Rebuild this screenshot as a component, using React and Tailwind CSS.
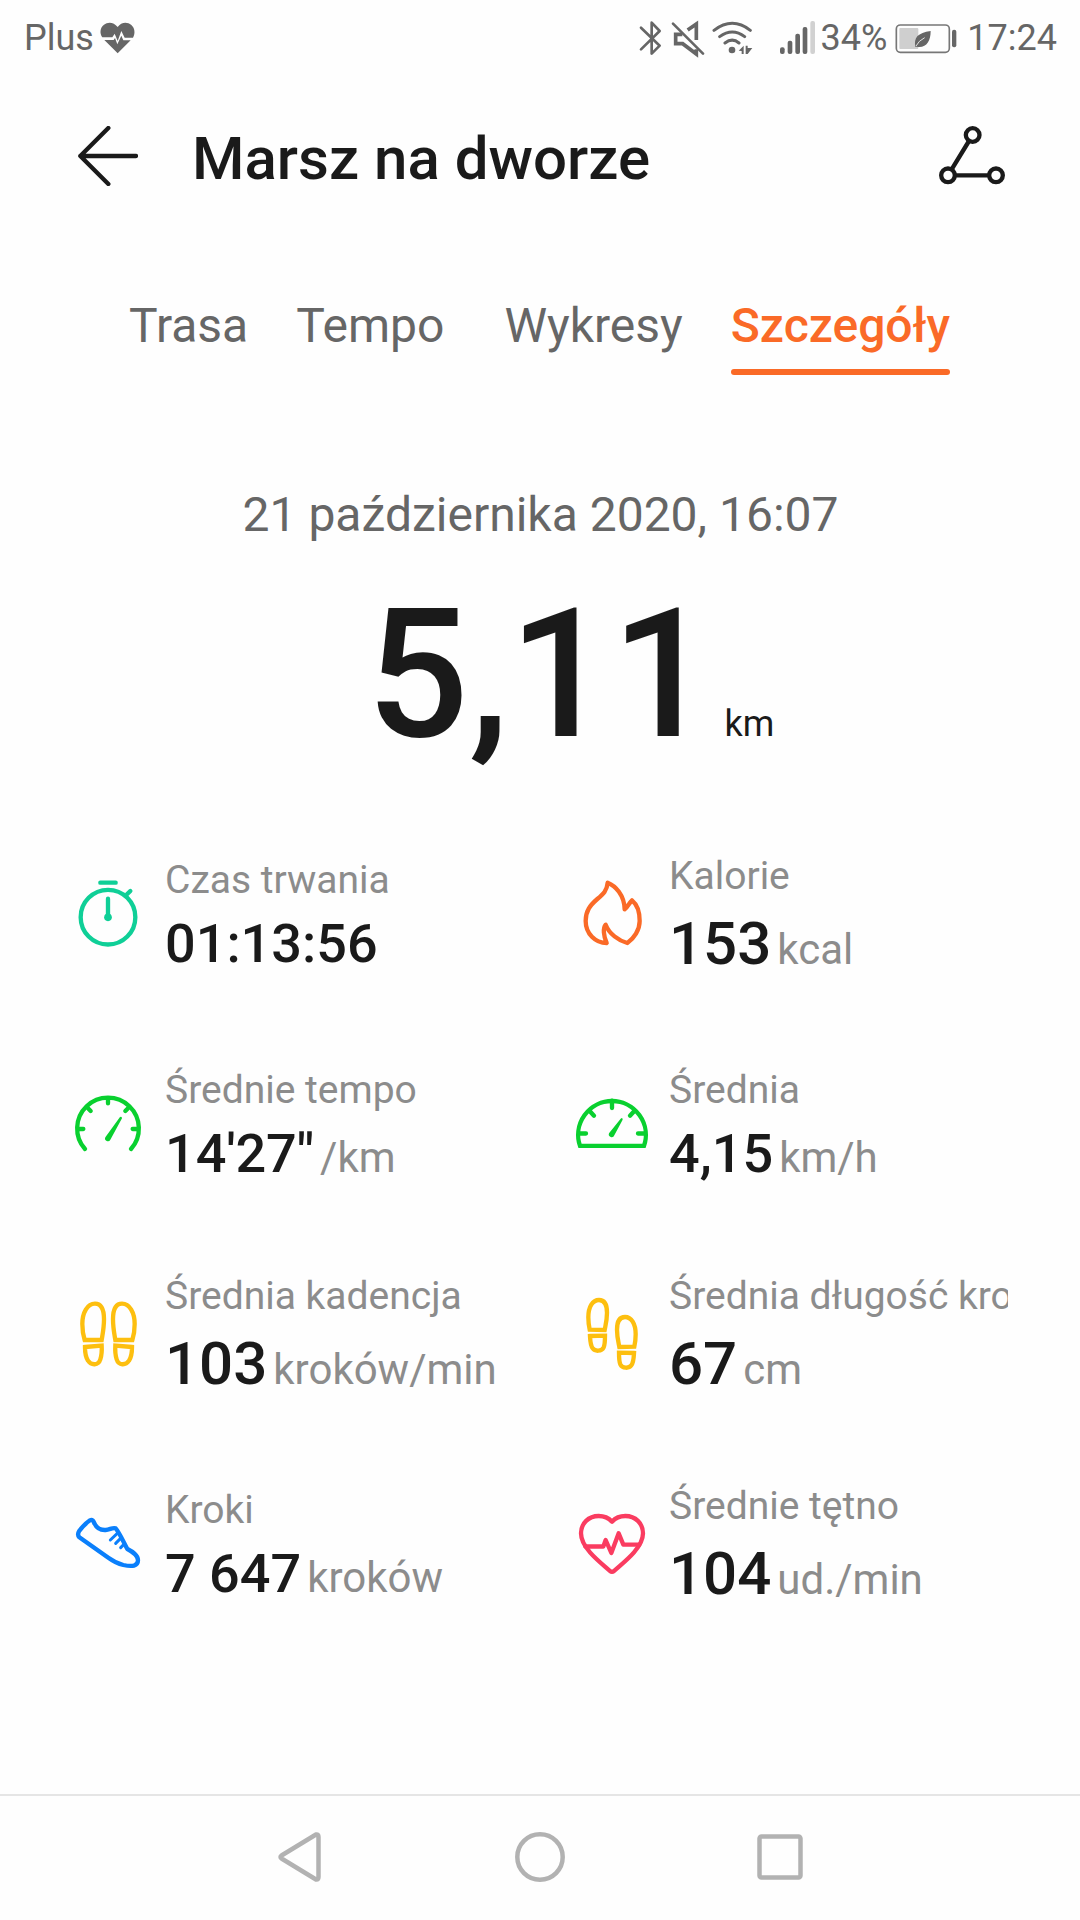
const STATS = [
  { label: 'Czas trwania', value: '01:13:56', icon: StopwatchIcon },
  { label: 'Kalorie', value: '153', unit: 'kcal', large: true, icon: FlameIcon },
  { label: 'Średnie tempo', value: '14\'27"', unit: '/km', icon: PaceIcon },
  { label: 'Średnia', value: '4,15', unit: 'km/h', icon: SpeedIcon },
  { label: 'Średnia kadencja', value: '103', unit: 'kroków/min', large: true, icon: CadenceIcon },
  { label: 'Średnia długość kroku', value: '67', unit: 'cm', large: true, icon: StrideIcon },
  { label: 'Kroki', value: '7 647', unit: 'kroków', icon: ShoeIcon },
  { label: 'Średnie tętno', value: '104', unit: 'ud./min', large: true, icon: HeartRateIcon },
];

function StatIcon({ viewBox, color, children }) {
  return (
    <svg
      viewBox={viewBox}
      className="w-[72px] h-[72px] shrink-0 overflow-visible"
      fill="none"
      stroke={color}
      strokeWidth="13"
      strokeLinecap="round"
      strokeLinejoin="round"
    >
      {children}
    </svg>
  );
}

function StopwatchIcon() {
  return (
    <StatIcon viewBox="36 120 216 216" color="#0fcf97">
      <circle cx="144" cy="231.500" r="82" />
      <path d="M121 128H167M201 163L211 153M144 176V231" />
      <circle cx="144" cy="232" r="11.500" fill="#0fcf97" stroke="none" />
    </StatIcon>
  );
}

function FlameIcon() {
  return (
    <StatIcon viewBox="48 120 216 216" color="#fa6a27">
      <path d="M143 128C166 137 193 165 194 208C203 203 206 190 216 181C232 194 239 220 239 243C239 270 222 295 202 309C176 302 147 281 137 254C128 264 131 290 140 309C106 309 77 281 77 243C77 213 90 196 112 177C130 162 141 152 143 128Z" />
    </StatIcon>
  );
}

function PaceIcon() {
  return (
    <StatIcon viewBox="36 120 216 216" color="#09d02f">
      <path d="M75 297A92.500 92.500 0 1 1 213 297" />
      <path d="M144 146V160M84 175L92 183M204 175L196 183M56 237H70M232 237H218" />
      <path d="M180 201Q186 198 186 205L151 269A8 8 0 0 1 136 262Z" fill="#09d02f" stroke="none" />
    </StatIcon>
  );
}

function SpeedIcon() {
  return (
    <StatIcon viewBox="48 120 216 216" color="#09d02f">
      <path d="M60 287.500A101.500 101.500 0 1 1 252 287.500Z" strokeLinejoin="miter" />
      <path d="M156 152V174M91 185L102 197M221 185L210 197M58 250.500H78M254 250.500H234" />
      <path d="M182 206Q188 201 188 209L163 256A8 8 0 0 1 147 250Z" fill="#09d02f" stroke="none" />
    </StatIcon>
  );
}

function CadenceIcon() {
  return (
    <StatIcon viewBox="36 120 216 216" color="#fdbf0f">
      <CadenceSole />
      <g transform="translate(291 0) scale(-1 1)">
        <CadenceSole />
      </g>
    </StatIcon>
  );
}

function CadenceSole() {
  return (
    <g strokeWidth="13" strokeLinejoin="miter">
      <path d="M74 240C69 224 67 208 67 192C67 158 82 131 105 131C124 131 132 149 132 178C132 204 128 222 125 240Z" />
      <path d="M75 261L125 257C126 274 124 289 121 298C115 317 94 317 84 302C77 292 75 279 75 261Z" />
    </g>
  );
}

function StrideIcon() {
  return (
    <StatIcon viewBox="48 120 216 216" color="#fdbf0f">
      <StrideSole />
      <g transform="translate(312 51) scale(-1 1)">
        <StrideSole />
      </g>
    </StatIcon>
  );
}

function StrideSole() {
  return (
    <g strokeWidth="13" strokeLinejoin="miter">
      <path d="M89 209C86 195 85 184 85 172C85 140 98 120 117 120C134 120 141 136 141 158C141 180 137 195 134 210Z" />
      <path d="M90 228L135 227C135 245 134 255 131 262C125 275 105 275 98 265C91 255 91 245 90 228Z" />
    </g>
  );
}

function ShoeIcon() {
  return (
    <StatIcon viewBox="36 120 216 216" color="#0a7ffb">
      <path d="M101 155C107 171 120 181 137 180C150 179 157 172 167 175C179 189 190 215 202 237C217 245 234 254 234 271C234 288 217 291 190 285C170 280 156 271 145 263L58 202Q51 194 57 184C69 167 80 158 90 151Q97 147 101 155Z" />
      <path d="M172 190L151 210M184 203L167 220M194 221L182 233" strokeWidth="9" />
    </StatIcon>
  );
}

function HeartRateIcon() {
  return (
    <StatIcon viewBox="48 120 216 216" color="#fa3c60">
      <path d="M156 155C145 143 130 138 116 138C86 138 63 160 63 190C63 211 75 230 90 247C110 270 135 289 150 303Q156 308 162 303C177 289 202 270 222 247C237 230 249 211 249 190C249 160 226 138 196 138C182 138 167 143 156 155Z" />
      <path d="M76 229.500H130L137 210L154 249L176 190L190 224H238" />
    </StatIcon>
  );
}

function StatusBar() {
  return (
    <div className="flex h-[76px] items-center pl-[24px] pr-[23px] text-[36px] leading-[76px] text-[#666666]">
      <span>Plus</span>
      <svg viewBox="297 49 111 120" className="ml-[5px] w-[37px] h-[40px]" fill="#666666">
        <path d="M353 76C341 60 323 60 312 69C299 79 299 96 307 107H337L344 96L353 118L364 88L374 108H399C407 94 404 79 394 70C381 59 363 62 353 76Z" />
        <path d="M313 115H341L345 109L352 128L364 102L370 116H392L353 155Z" />
      </svg>

      <svg viewBox="54 48 72 120" className="ml-auto w-[24px] h-[40px]" fill="none" stroke="#666666" strokeWidth="8" strokeLinecap="round">
        <path d="M60 77L116 131L92 155V62L116 87L60 142" strokeLinejoin="round" />
      </svg>
      <svg viewBox="150 48 102 120" className="ml-[8px] w-[34px] h-[40px]" fill="none" stroke="#666666" strokeWidth="8" strokeLinecap="round">
        <path d="M156 65L246 155" />
        <path d="M200 84L226 66V114M184 97H164V125H185L226 156V142" strokeWidth="11" strokeLinecap="butt" />
      </svg>
      <svg viewBox="273 48 123 120" className="ml-[7px] w-[41px] h-[40px]" fill="none" stroke="#666666" strokeWidth="9" strokeLinecap="round">
        <path d="M279 85Q334 43 388 85M296 104Q334 76 371 104M312 123Q334 106 354 123" />
        <circle cx="333" cy="144" r="10" fill="#666666" stroke="none" />
        <path d="M353 146L368 131V156H362V147ZM374 131H380V138H394L380 156H374Z" fill="#666666" stroke="none" />
      </svg>
      <svg viewBox="474 48 111 120" className="ml-[26px] w-[37px] h-[40px]">
        <rect x="477" y="136" width="14" height="20" rx="6" fill="#666666" />
        <rect x="500" y="116" width="14" height="40" rx="6" fill="#666666" />
        <rect x="523" y="95" width="14" height="61" rx="6" fill="#666666" />
        <rect x="545" y="75" width="14" height="81" rx="6" fill="#666666" />
        <rect x="568" y="57" width="14" height="99" rx="6" fill="#d1d1d1" />
      </svg>
      <span className="ml-[5px]">34%</span>
      <svg viewBox="825 48 186 120" className="ml-[8px] w-[62px] h-[40px]">
        <rect x="829" y="69" width="159" height="82" rx="12" fill="none" stroke="#777777" strokeWidth="5" />
        <rect x="838" y="78" width="57" height="63" rx="3" fill="#cfcfcf" />
        <rect x="996" y="83" width="13" height="53" rx="6" fill="#666666" />
        <path d="M886 135C881 106 893 93 932 87C932 119 918 139 890 134Z" fill="#666666" />
        <path d="M888 132Q896 116 914 107" fill="none" stroke="#e4e4e4" strokeWidth="3" />
      </svg>
      <span className="ml-[10px]">17:24</span>
    </div>
  );
}

function Header() {
  return (
    <header className="flex h-[160px] items-center pl-[78px] pr-[75px]">
      <svg viewBox="234 378 180 180" className="w-[60px] h-[60px]" fill="none" stroke="#1a1a1a" strokeWidth="13" strokeLinecap="round" strokeLinejoin="round">
        <path d="M408 468H241M325 384L241 468L325 552" />
      </svg>
      <h1 className="ml-[54px] pt-[5px] text-[60px] leading-[70px] font-medium">Marsz na dworze</h1>
      <svg viewBox="957 378 198 180" className="ml-auto w-[66px] h-[60px]" fill="none" stroke="#1a1a1a" strokeWidth="13">
        <path d="M1047 423L995 508M1004 526H1108" />
        <circle cx="1058" cy="405" r="20.500" />
        <circle cx="984" cy="526" r="20.500" />
        <circle cx="1128" cy="526" r="20.500" />
      </svg>
    </header>
  );
}

function Tabs() {
  return (
    <nav className="flex pt-[62px] pl-[129px] text-[48px] leading-[56px] text-[#666666]">
      <span>Trasa</span>
      <span className="ml-[48px]">Tempo</span>
      <span className="ml-[60px]">Wykresy</span>
      <span className="ml-[48px] font-medium text-[#fa6a27]">
        Szczegóły
        <span className="mt-[15px] block h-[6px] rounded-full bg-[#fa6a27]" />
      </span>
    </nav>
  );
}

function Stat({ label, value, unit, large, icon: Icon }) {
  return (
    <div className="flex h-[210px] items-center gap-[21px]">
      <Icon />
      <div className="min-w-0 flex-1 overflow-hidden whitespace-nowrap text-[#8c8c8c]">
        <div className="text-[39px] leading-[46px]">{label}</div>
        <div className={large ? 'mt-[10px] flex items-baseline' : 'mt-[9px] flex items-baseline'}>
          <span className={large ? 'text-[60px] leading-[70px] font-medium text-[#1a1a1a]' : 'text-[54px] leading-[63px] font-medium text-[#1a1a1a]'}>
            {value}
          </span>
          {unit && <span className="ml-[6px] text-[42px] leading-[49px]">{unit}</span>}
        </div>
      </div>
    </div>
  );
}

function SystemNav() {
  return (
    <div className="flex h-[126px] items-center justify-between border-t-2 border-[#e5e5e5] px-[274px] pb-[2px]">
      <svg viewBox="0 0 52 60" className="w-[52px] h-[60px]" fill="none" stroke="#b2b2b2" strokeWidth="4.500" strokeLinejoin="round">
        <path d="M7.500 28.500Q5.500 30 7.500 31.500L42 52.500Q44.500 53 44.500 50V10Q44.500 7 42 7.500Z" />
      </svg>
      <svg viewBox="0 0 60 60" className="w-[60px] h-[60px]" fill="none" stroke="#b2b2b2" strokeWidth="4.500">
        <circle cx="30" cy="30" r="22.700" />
      </svg>
      <svg viewBox="0 0 52 60" className="w-[52px] h-[60px]" fill="none" stroke="#b2b2b2" strokeWidth="4.500">
        <rect x="5.500" y="9.500" width="41" height="41" rx="2" />
      </svg>
    </div>
  );
}

export default function App() {
  return (
    <div className="flex h-[1920px] w-[1080px] flex-col overflow-hidden bg-[#fefefe] font-['Roboto',sans-serif] text-[#1a1a1a]">
      <StatusBar />
      <Header />
      <Tabs />

      <main className="flex-1">
        <p className="mt-[112px] pl-px text-center text-[48px] leading-[56px] text-[#666666]">
          21 października 2020, 16:07
        </p>
        <div className="mt-[42px] grid grid-cols-[1fr_auto_1fr] items-baseline">
          <span />
          <span className="text-[180px] leading-[180px] font-medium">5,11</span>
          <span className="ml-[11px] text-[36px] leading-[42px]">km</span>
        </div>
        <section className="mt-[46px] grid grid-cols-[504px_432px] px-[72px]">
          {STATS.map((stat) => (
            <Stat key={stat.label} {...stat} />
          ))}
        </section>
      </main>

      <SystemNav />
    </div>
  );
}
